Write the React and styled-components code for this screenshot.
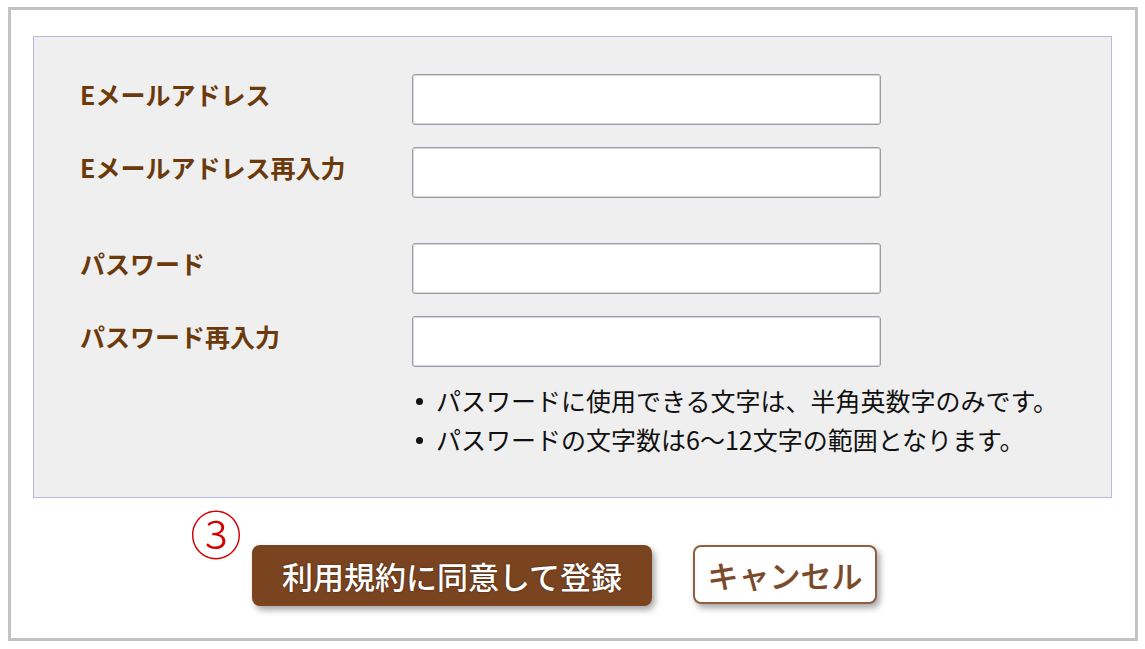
import styled, { createGlobalStyle } from "styled-components";

const GlobalStyle = createGlobalStyle`
  html, body {
    margin: 0;
    padding: 0;
    background: #ffffff;
  }
  body {
    font-family: "Noto Sans CJK JP", "Noto Sans", sans-serif;
  }
`;

const fields = [
  { label: "Eメールアドレス", type: "email" },
  { label: "Eメールアドレス再入力", type: "email" },
  { label: "パスワード", type: "password", spaced: true },
  { label: "パスワード再入力", type: "password" },
];

const notes = [
  "パスワードに使用できる文字は、半角英数字のみです。",
  "パスワードの文字数は6～12文字の範囲となります。",
];

export default function App() {
  return (
    <>
      <GlobalStyle />
      <Frame>
        <FormPanel>
          {fields.map((f) => (
            <Row key={f.label} $spaced={f.spaced}>
              <Label>{f.label}</Label>
              <Input type={f.type} />
            </Row>
          ))}
          <NoteList>
            {notes.map((n) => (
              <Note key={n}>{n}</Note>
            ))}
          </NoteList>
        </FormPanel>
        <ButtonArea>
          <StepMark>③</StepMark>
          <SubmitButton type="button">利用規約に同意して登録</SubmitButton>
          <CancelButton type="button">キャンセル</CancelButton>
        </ButtonArea>
      </Frame>
    </>
  );
}

const Frame = styled.div`
  box-sizing: border-box;
  margin: 7px 7px 0 8px;
  height: 634px;
  border: 3px solid #c3c3c3;
  padding: 26px 23px 0 22px;
`;

const FormPanel = styled.div`
  box-sizing: border-box;
  height: 462px;
  background: #efefef;
  border: 1px solid #b9b9db;
  padding: 37px 0 0 46px;
  display: flex;
  flex-direction: column;
  gap: 22px;
`;

const Row = styled.div`
  display: flex;
  align-items: center;
  margin-top: ${(p) => (p.$spaced ? "23px" : "0")};
`;

const Label = styled.div`
  width: 332px;
  flex-shrink: 0;
  font-size: 25px;
  font-weight: 700;
  line-height: 1;
  color: #6b3a0c;
  padding-bottom: 10px;
`;

const Input = styled.input`
  box-sizing: border-box;
  width: 469px;
  height: 51px;
  border: 1px solid #9c9ca6;
  border-radius: 3px;
  background: #ffffff;
  box-shadow: inset 0 0 0 1px #d6d6dc;
  font-size: 22px;
  padding: 0 10px;
  outline: none;
`;

const NoteList = styled.ul`
  list-style: none;
  margin: -8px 0 0 334px;
  padding: 0;
`;

const Note = styled.li`
  position: relative;
  padding-left: 22px;
  font-size: 25px;
  line-height: 39px;
  color: #111111;

  &::before {
    content: "";
    position: absolute;
    left: 2px;
    top: 17px;
    width: 7px;
    height: 7px;
    border-radius: 50%;
    background: #111111;
  }
`;

const ButtonArea = styled.div`
  position: relative;
  display: flex;
  align-items: flex-start;
  gap: 41px;
  padding: 47px 0 0 219px;
`;

const StepMark = styled.span`
  position: absolute;
  left: 157px;
  top: 9px;
  font-size: 52px;
  font-weight: 300;
  line-height: 1;
  color: #d40000;
`;

const BaseButton = styled.button`
  box-sizing: border-box;
  font-family: "Noto Sans CJK JP", "Noto Sans", sans-serif;
  font-size: 31px;
  font-weight: 700;
  line-height: 1;
  border-radius: 8px;
  cursor: pointer;
  box-shadow: 3px 4px 6px rgba(0, 0, 0, 0.35);
  padding: 0;
`;

const SubmitButton = styled(BaseButton)`
  width: 400px;
  height: 61px;
  background: #7a4421;
  border: none;
  color: #ffffff;
  font-weight: 500;
  text-shadow: 0 0 2px rgba(0, 0, 0, 0.5);
`;

const CancelButton = styled(BaseButton)`
  width: 184px;
  height: 59px;
  background: #ffffff;
  border: 2px solid #8f5f3f;
  color: #7a4a2a;
  font-weight: 500;
  text-shadow: 0 0 1px rgba(122, 74, 42, 0.4);
`;
